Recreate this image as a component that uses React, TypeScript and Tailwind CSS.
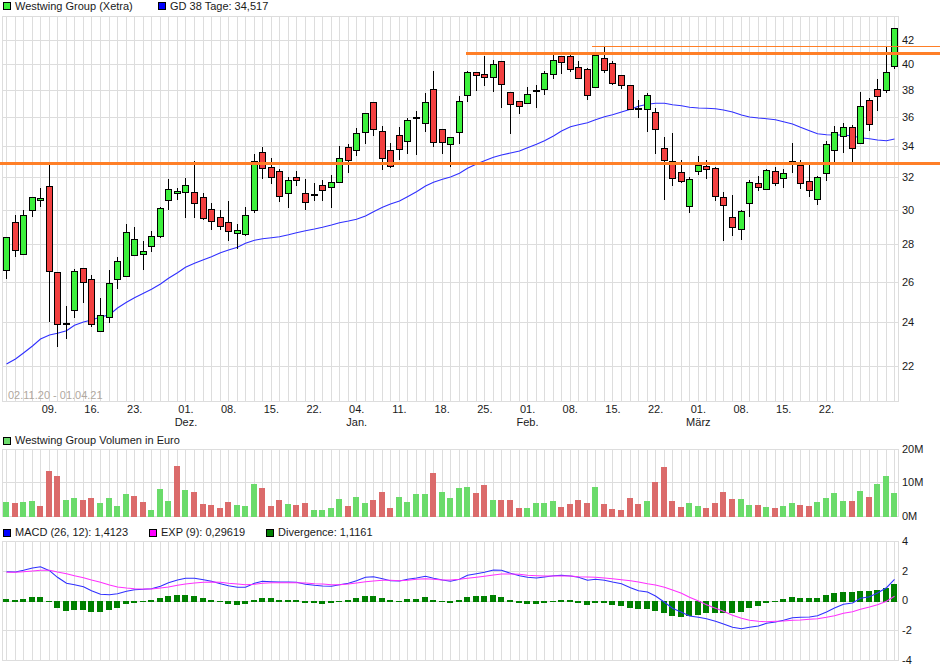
import React from 'react'

type Candle = [number, number, number, number, 'g' | 'r' | 'd']

// high, body top, body bottom, low (pixel rows of the price panel)
const candles: Candle[] = [
  [237, 237, 270, 278, 'g'], [215, 222, 250, 256, 'r'], [210, 215, 254, 254, 'g'], [197, 197, 210, 216, 'g'], [188, 198, 200, 206, 'g'],
  [163, 186, 271, 321, 'r'], [272, 272, 324, 346, 'r'], [306, 323, 323, 338, 'd'], [269, 271, 310, 317, 'g'], [268, 268, 282, 302, 'r'],
  [275, 279, 324, 326, 'r'], [298, 315, 331, 331, 'g'], [270, 283, 317, 322, 'g'], [257, 261, 279, 288, 'g'], [224, 232, 276, 276, 'g'],
  [227, 239, 255, 255, 'g'], [241, 251, 254, 269, 'g'], [231, 236, 246, 251, 'g'], [207, 208, 236, 237, 'g'], [179, 189, 200, 209, 'g'],
  [188, 191, 193, 199, 'g'], [178, 185, 192, 217, 'g'], [161, 192, 203, 217, 'r'], [193, 197, 218, 219, 'r'], [203, 209, 221, 229, 'r'],
  [210, 217, 226, 229, 'r'], [201, 222, 231, 240, 'r'], [224, 230, 233, 248, 'g'], [207, 215, 234, 235, 'g'], [154, 161, 210, 212, 'g'],
  [147, 152, 168, 178, 'r'], [158, 167, 177, 183, 'r'], [169, 171, 196, 201, 'r'], [177, 180, 193, 207, 'g'], [171, 177, 180, 185, 'r'],
  [179, 193, 202, 209, 'r'], [183, 194, 194, 200, 'd'], [180, 185, 190, 200, 'r'], [175, 182, 187, 207, 'g'], [146, 158, 182, 182, 'g'],
  [144, 147, 160, 172, 'r'], [128, 133, 150, 155, 'g'], [113, 113, 132, 143, 'g'], [102, 102, 129, 135, 'r'], [126, 131, 158, 169, 'r'],
  [143, 150, 166, 167, 'r'], [127, 135, 149, 159, 'r'], [118, 120, 141, 153, 'g'], [111, 117, 117, 154, 'd'], [93, 102, 123, 131, 'g'],
  [71, 89, 142, 146, 'r'], [129, 129, 142, 153, 'r'], [137, 137, 144, 166, 'g'], [96, 101, 132, 143, 'g'], [71, 72, 95, 101, 'g'],
  [72, 72, 75, 90, 'r'], [56, 74, 77, 85, 'r'], [60, 64, 77, 91, 'g'], [61, 61, 84, 107, 'r'], [92, 92, 104, 133, 'r'],
  [101, 101, 106, 113, 'r'], [87, 94, 103, 103, 'g'], [85, 90, 90, 107, 'd'], [71, 73, 89, 94, 'g'], [55, 60, 74, 78, 'g'],
  [56, 56, 62, 73, 'r'], [55, 56, 69, 71, 'r'], [61, 67, 78, 78, 'r'], [68, 69, 95, 99, 'r'], [55, 55, 87, 87, 'g'],
  [47, 58, 70, 72, 'r'], [61, 63, 83, 84, 'r'], [75, 75, 85, 88, 'r'], [85, 85, 109, 109, 'r'], [100, 108, 108, 117, 'd'],
  [93, 95, 109, 131, 'g'], [108, 112, 129, 153, 'r'], [137, 148, 160, 199, 'r'], [133, 161, 178, 185, 'r'], [160, 172, 181, 182, 'r'],
  [177, 179, 206, 212, 'g'], [156, 165, 171, 174, 'g'], [160, 166, 169, 178, 'r'], [167, 168, 196, 200, 'r'], [192, 197, 205, 240, 'r'],
  [195, 217, 227, 235, 'r'], [210, 211, 229, 239, 'g'], [180, 182, 203, 216, 'g'], [176, 183, 187, 190, 'r'], [169, 170, 189, 189, 'g'],
  [167, 171, 183, 185, 'r'], [169, 173, 178, 187, 'g'], [143, 161, 161, 172, 'd'], [160, 165, 183, 188, 'r'], [163, 181, 190, 196, 'r'],
  [176, 177, 199, 204, 'g'], [141, 144, 173, 180, 'g'], [126, 132, 150, 162, 'g'], [123, 127, 136, 152, 'g'], [125, 127, 148, 161, 'r'],
  [92, 106, 143, 143, 'g'], [98, 100, 124, 130, 'r'], [79, 89, 96, 110, 'r'], [47, 72, 90, 92, 'g'], [28, 28, 66, 68, 'g'],
]

const gd38 = [
  364, 359, 353, 346, 339, 335, 333.3, 330.7, 325.3, 322, 320, 317, 314.7, 308, 302.3, 297.7, 293.3, 289.3, 284, 278.3, 272.7,
  267.3, 263.3, 259.7, 256.7, 252.7, 250, 247.3, 243.3, 240.3, 238.7, 237.7, 236.7, 234.7, 232.7, 230.7, 229, 227.3, 225, 222.7,
  221, 219.3, 216, 211.7, 207.3, 204, 201, 196.7, 191.7, 186, 182.3, 179.3, 177, 173.3, 168.3, 164, 160.7, 157.3, 155, 153, 151,
  147.7, 144.3, 140.7, 136, 131, 126.7, 124.7, 122.7, 119.7, 116.7, 114.7, 112, 109.3, 106.3, 104.3, 103.3, 103.3, 104.7, 105.7,
  107.3, 108, 108.3, 108.7, 110, 112, 115, 117, 118, 118.7, 119.7, 121.7, 124, 127.3, 130.7, 133.7, 134.7, 135, 135, 136, 137.7,
  138.7, 140, 140.7, 139,
]

// volume bar tops, r marks a red bar
const volume: [number, 0 | 1][] = [
  [502, 0], [503, 1], [502, 0], [501, 0], [506, 1], [471, 1], [476, 1], [500, 0], [498, 0], [500, 1], [498, 1], [503, 0], [498, 0], [506, 0],
  [494, 0], [496, 1], [502, 1], [510, 0], [489, 0], [501, 0], [466, 1], [490, 0], [492, 1], [504, 1], [505, 1], [508, 1], [502, 1], [505, 0],
  [506, 0], [484, 0], [488, 1], [506, 1], [500, 1], [504, 0], [505, 1], [503, 1], [510, 0], [510, 0], [508, 0], [499, 0], [506, 1], [497, 0],
  [503, 0], [500, 1], [492, 1], [508, 1], [497, 0], [502, 0], [494, 0], [494, 0], [473, 1], [492, 0], [498, 0], [488, 0], [487, 0],
  [493, 1], [485, 1], [500, 0], [500, 1], [500, 1], [508, 1], [508, 0], [503, 0], [503, 0], [501, 0], [507, 1], [504, 1], [500, 1], [503, 1],
  [487, 0], [504, 1], [509, 1], [510, 1], [498, 1], [504, 1], [501, 0], [482, 1], [467, 1], [501, 1], [507, 1], [503, 0], [506, 0], [508, 1],
  [503, 1], [492, 1], [499, 1], [499, 0], [505, 0], [505, 1], [507, 0], [508, 1], [506, 0], [503, 0], [505, 1], [506, 1], [502, 0], [498, 0],
  [493, 0], [501, 0], [501, 1], [491, 0], [497, 1], [484, 0], [476, 0], [493, 0],
]

// divergence bars as [top, bottom] in panel rows
const divRaw = [
  [238, 245], [241, 245], [238, 245], [231, 245], [231, 245], [243, 245], [243, 264], [243, 272], [243, 270], [243, 270], [243, 275], [243, 275],
  [243, 270], [243, 264], [243, 252], [243, 249], [243, 246], [240, 246], [234, 246], [228, 246], [225, 246], [225, 246], [228, 246], [234, 246],
  [240, 246], [243, 246], [243, 252], [243, 255], [243, 252], [240, 246], [234, 246], [234, 246], [240, 246], [240, 246], [240, 246], [243, 249],
  [243, 249], [243, 252], [243, 249], [243, 246], [240, 246], [234, 246], [228, 246], [228, 246], [234, 246], [241, 246], [243, 246], [237, 246],
  [237, 246], [231, 246], [240, 246], [243, 246], [243, 249], [240, 246], [231, 246], [228, 246], [228, 246], [225, 246], [231, 246], [240, 246],
  [243, 249], [243, 252], [243, 252], [243, 249], [243, 246], [240, 246], [240, 246], [243, 249], [243, 255], [243, 249], [243, 249], [243, 255],
  [243, 258], [243, 264], [243, 267], [243, 267], [243, 273], [243, 279], [243, 288], [243, 291], [243, 288], [243, 285], [243, 279], [243, 279],
  [243, 279], [243, 279], [243, 276], [243, 264], [243, 258], [243, 249], [243, 246], [237, 246], [231, 246], [234, 246], [234, 246], [234, 246],
  [225, 246], [219, 246], [216, 246], [216, 246], [213, 246], [213, 246], [210, 246], [204, 246], [192, 246],
]

const macdRaw = [
  155, 156, 151, 144, 140, 152, 172, 190, 194, 200, 212, 223, 224, 221, 214, 209, 208, 206, 199, 188, 180, 175, 175, 179, 184, 191, 197, 202, 202,
  190, 184, 185, 186, 186, 187, 193, 196, 198, 199, 194, 190, 182, 172, 170, 176, 182, 183, 178, 174, 169, 175, 180, 184, 178, 166, 161, 157, 150,
  151, 160, 167, 172, 174, 171, 167, 166, 168, 172, 181, 178, 181, 186, 191, 203, 212, 216, 228, 247, 265, 277, 288, 292, 296, 304, 312, 322, 326,
  322, 318, 310, 306, 301, 293, 292, 291, 287, 276, 264, 253, 249, 235, 230, 219, 203, 178,
]

const expRaw = [
  157, 157, 155, 153, 151, 151, 156, 161, 167, 173, 180, 187, 195, 201, 204, 206, 207, 207, 204, 201, 196, 192, 189, 187, 186, 187, 190, 192, 194,
  193, 190, 188, 188, 188, 188, 189, 191, 192, 194, 194, 192, 189, 185, 183, 181, 181, 182, 181, 178, 176, 178, 180, 180, 178, 175, 172, 169, 165,
  162, 162, 163, 166, 167, 168, 168, 168, 168, 170, 171, 172, 174, 176, 179, 182, 186, 191, 195, 202, 210, 220, 232, 243, 254, 265, 274, 286, 295,
  301, 304, 305, 304, 303, 301, 300, 298, 296, 292, 287, 280, 275, 268, 261, 254, 244, 229,
]

const COUNT = 105
const xAt = (i: number) => 6.6 + 8.54 * i
const pxAt = (i: number) => Math.floor(xAt(i))
const slots = Array.from({ length: COUNT }, (_, i) => i)
const fromZoom = (z: number) => 520 + z / 3
const linePts = (vals: number[], toY: (v: number) => number) =>
  vals.map((v, i) => `${pxAt(i) + 0.5},${toY(v).toFixed(1)}`).join(' ')

const days: [string, number][] = [
  ['09.', 5], ['16.', 10], ['23.', 15], ['01.', 21], ['08.', 26], ['15.', 31], ['22.', 36], ['04.', 41], ['11.', 46], ['18.', 51],
  ['25.', 56], ['01.', 61], ['08.', 66], ['15.', 71], ['22.', 76], ['01.', 81], ['08.', 86], ['15.', 91], ['22.', 96],
]
const months: [string, number][] = [['Dez.', 21], ['Jan.', 41], ['Feb.', 61], ['März', 81]]
const priceAxis: [string, number][] = [
  ['42', 40], ['40', 64], ['38', 90], ['36', 117], ['34', 146], ['32', 177], ['30', 210], ['28', 244], ['26', 282], ['24', 322], ['22', 366],
]

const Legend = ({ items, className }: { items: { color: string; label: string; w: string }[]; className: string }) => (
  <div className={`flex items-center pl-[3px] ${className}`}>
    {items.map((it) => (
      <div key={it.label} className={`flex items-center gap-[4px] ${it.w}`}>
        <span className={`w-[8px] h-[8px] border border-black ${it.color}`} />
        <span className="leading-none">{it.label}</span>
      </div>
    ))}
  </div>
)

const Grid = ({ top, bottom, rows }: { top: number; bottom: number; rows: number[] }) => (
  <g stroke="#dddddd" strokeWidth={1} shapeRendering="crispEdges">
    {rows.map((y) => (
      <line key={y} x1={2} x2={899} y1={y + 0.5} y2={y + 0.5} />
    ))}
    <line x1={2.5} x2={2.5} y1={top} y2={bottom} />
    <line x1={898.5} x2={898.5} y1={top} y2={bottom} />
    {slots.map((i) => (
      <line key={i} x1={pxAt(i) + 0.5} x2={pxAt(i) + 0.5} y1={top} y2={bottom} />
    ))}
  </g>
)

const CandleMark = ({ c, i }: { c: Candle; i: number }) => {
  const x = pxAt(i)
  const [hi, top, bot, lo, kind] = c
  return (
    <g shapeRendering="crispEdges">
      <line x1={x + 0.5} x2={x + 0.5} y1={hi} y2={lo + 1} stroke="#000" />
      {kind === 'd' ? (
        <rect x={x - 3} y={top} width={7} height={2} fill="#000" />
      ) : (
        <rect
          x={x - 2.5}
          y={top + 0.5}
          width={6}
          height={bot - top}
          fill={kind === 'g' ? '#3cf03c' : '#f24040'}
          stroke="#000"
        />
      )}
    </g>
  )
}

const AxisText = ({ y, children }: { y: number; children: React.ReactNode }) => (
  <text x={902} y={y + 4} fill="#1a1a1a">
    {children}
  </text>
)

export default function App() {
  return (
    <div className="w-[940px] h-[670px] bg-white overflow-hidden flex flex-col text-[11px] text-[#1a1a1a] font-['Liberation_Sans',sans-serif]">
      <Legend
        className="h-[12px]"
        items={[
          { color: 'bg-[#3cf03c]', label: 'Westwing Group (Xetra)', w: 'w-[155px]' },
          { color: 'bg-[#0000ff]', label: 'GD 38 Tage: 34,517', w: 'w-[140px]' },
        ]}
      />
      <svg className="block" width={940} height={422} viewBox="0 12 940 422" fontSize={11}>
        <Grid top={16} bottom={402} rows={[16, 40, 64, 90, 117, 146, 177, 210, 244, 282, 322, 366, 401]} />
        <text x={8} y={399} fill="#b0a8a0">02.11.20 - 01.04.21</text>
        <polyline points={linePts(gd38, (v) => v)} fill="none" stroke="#3030ff" strokeWidth={1.1} />
        {candles.map((c, i) => (
          <CandleMark key={i} c={c} i={i} />
        ))}
        <g shapeRendering="crispEdges">
          <rect x={0} y={162} width={940} height={3} fill="#ff7f27" />
          <rect x={466} y={52} width={474} height={3} fill="#ff7f27" />
          <rect x={592} y={46} width={348} height={1} fill="#ff7f27" />
        </g>
        {priceAxis.map(([t, y]) => (
          <AxisText key={t} y={y}>{t}</AxisText>
        ))}
        {days.map(([t, i]) => (
          <text key={i} x={xAt(i)} y={413} textAnchor="middle" fill="#1a1a1a">{t}</text>
        ))}
        {months.map(([t, i]) => (
          <text key={t} x={xAt(i)} y={426} textAnchor="middle" fill="#1a1a1a">{t}</text>
        ))}
      </svg>
      <Legend
        className="h-[13px]"
        items={[{ color: 'bg-[#6bdb6b]', label: 'Westwing Group Volumen in Euro', w: 'w-[300px]' }]}
      />
      <svg className="block overflow-visible" width={940} height={79} viewBox="0 447 940 79" fontSize={11}>
        <Grid top={449} bottom={517} rows={[449, 482, 516]} />
        <g shapeRendering="crispEdges">
          {volume.map(([top, red], i) => (
            <rect key={i} x={pxAt(i) - 3} y={top} width={6} height={517 - top} fill={red ? '#db6b6b' : '#6bdb6b'} />
          ))}
        </g>
        <AxisText y={449}>20M</AxisText>
        <AxisText y={482}>10M</AxisText>
        <AxisText y={516}>0M</AxisText>
      </svg>
      <Legend
        className="h-[13px]"
        items={[
          { color: 'bg-[#0000ff]', label: 'MACD (26, 12): 1,4123', w: 'w-[146px]' },
          { color: 'bg-[#ff00ff]', label: 'EXP (9): 0,29619', w: 'w-[117px]' },
          { color: 'bg-[#008000]', label: 'Divergence: 1,1161', w: 'w-[140px]' },
        ]}
      />
      <svg className="block overflow-visible" width={940} height={131} viewBox="0 539 940 131" fontSize={11}>
        <Grid top={541} bottom={661} rows={[541, 571, 601, 630, 660]} />
        <g shapeRendering="crispEdges">
          {divRaw.map(([t, b], i) => {
            const top = Math.round(fromZoom(t))
            return <rect key={i} x={pxAt(i) - 3} y={top} width={6} height={Math.max(1, Math.round(fromZoom(b)) - top)} fill="#008000" />
          })}
        </g>
        <polyline points={linePts(macdRaw, fromZoom)} fill="none" stroke="#3030ff" strokeWidth={1.1} />
        <polyline points={linePts(expRaw, fromZoom)} fill="none" stroke="#ff30ff" strokeWidth={1.1} />
        <AxisText y={541}>4</AxisText>
        <AxisText y={571}>2</AxisText>
        <AxisText y={600}>0</AxisText>
        <AxisText y={630}>-2</AxisText>
        <AxisText y={660}>-4</AxisText>
      </svg>
    </div>
  )
}
